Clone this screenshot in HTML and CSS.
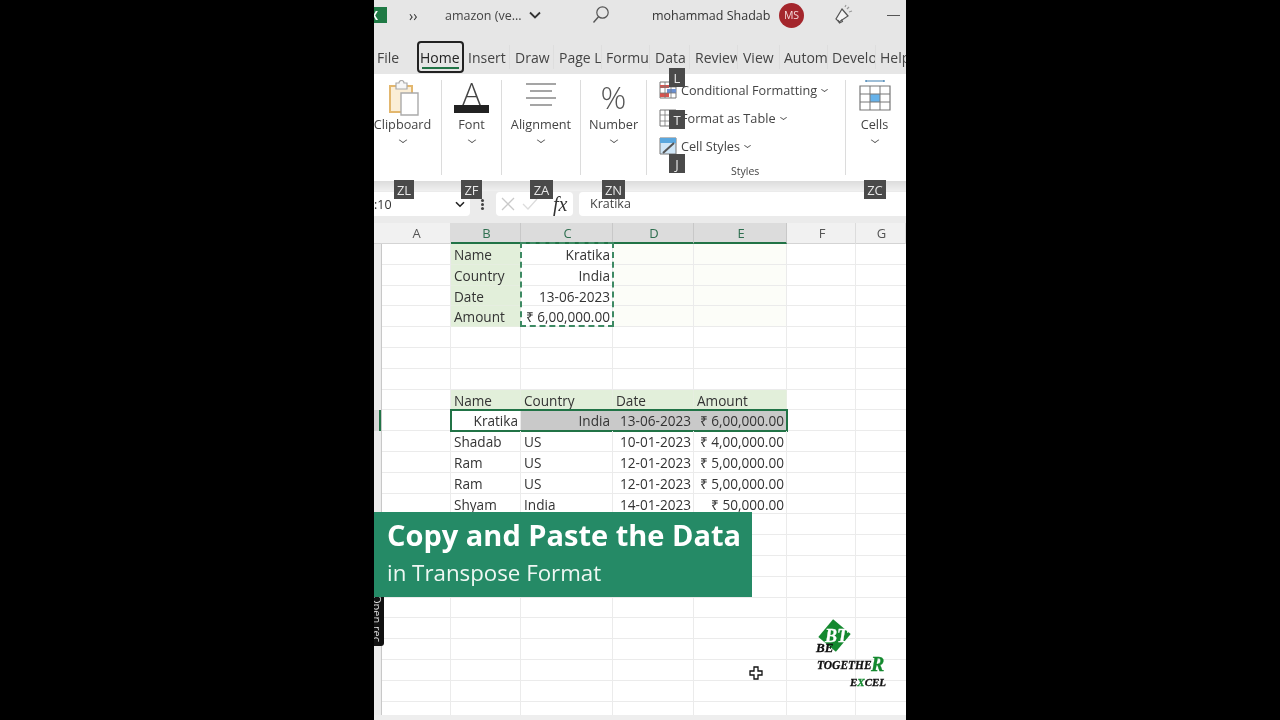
FILE: index.html
```html
<!DOCTYPE html>
<html>
    <head>
        <meta charset="utf-8">
        <title>Copy and Paste the Data</title>
        <link rel="stylesheet" href="styles.css">
    </head>
    <body>
        <div class="screen">
            <div class="titlebar">
                <div class="xlIcon"><span>X</span></div>
                <span class="more">››</span>
                <span class="docName">amazon (ve...</span>
                <svg class="docChevron" width="12" height="8" viewBox="0 0 12 8"><path d="M1 1.5l5 5 5-5" fill="none" stroke="#333" stroke-width="1.8"/></svg>
                <svg class="search" width="18" height="20" viewBox="0 0 18 20"><circle cx="10.5" cy="7.5" r="5.7" fill="none" stroke="#555" stroke-width="1.2"/><path d="M6.5 11.8L1.5 17.5" stroke="#555" stroke-width="1.4"/></svg>
                <span class="userName">mohammad Shadab</span>
                <span class="avatar">MS</span>
                <svg class="megaphone" width="20" height="22" viewBox="0 0 20 22"><path d="M8 5l6 7-9 6-3-3z" fill="#f4f4f4" stroke="#555" stroke-width="1.2"/><path d="M4 16l1.500 3 3-1.500-1-2" fill="none" stroke="#555" stroke-width="1.100"/><path d="M13 5l2-2M15 8l3-1M11 3l1-2" stroke="#999" stroke-width="1.200"/></svg>
                <span class="minimize"></span>
            </div>

            <div class="tabs">
                <span class="tab tabFile">File</span>
                <span class="tab tabHome">Home</span>
                <span class="tab tabInsert">Insert</span>
                <span class="tab tabDraw">Draw</span>
                <span class="tab tabPage">Page Layout</span>
                <span class="tab tabFormulas">Formulas</span>
                <span class="tab tabData">Data</span>
                <span class="tab tabReview">Review</span>
                <span class="tab tabView">View</span>
                <span class="tab tabAuto">Automate</span>
                <span class="tab tabDev">Developer</span>
                <span class="tab tabHelp">Help</span>
            </div>

            <div class="ribbon">
                <div class="group groupClipboard">
                    <svg class="bigIcon" width="34" height="36" viewBox="0 0 34 36"><path d="M3 6h22v26H3z" fill="#fbeed6" stroke="#e3b76e" stroke-width="2"/><path d="M9 3h3a2.500 2.500 0 0 1 5 0h3v6H9z" fill="#f7f7f7" stroke="#aaa" stroke-width="1.200"/><path d="M14 13h17v22H14z" fill="#fff" stroke="#aaa" stroke-width="1.400"/></svg>
                    <span class="groupLabel">Clipboard</span>
                    <span class="chev"></span>
                </div>
                <div class="group groupFont">
                    <div class="fontIcon"><span class="fontA">A</span><span class="fontBar"></span></div>
                    <span class="groupLabel">Font</span>
                    <span class="chev"></span>
                </div>
                <div class="group groupAlign">
                    <svg class="bigIcon" width="32" height="36" viewBox="0 0 32 36"><path d="M1 4h30M5 11h22M1 18h30M5 25h22" stroke="#888" stroke-width="1.300"/></svg>
                    <span class="groupLabel">Alignment</span>
                    <span class="chev"></span>
                </div>
                <div class="group groupNumber">
                    <span class="percent">%</span>
                    <span class="groupLabel">Number</span>
                    <span class="chev"></span>
                </div>
                <div class="group groupStyles">
                    <div class="styleRow">
                        <svg width="18" height="18" viewBox="0 0 18 18"><path d="M1 1h16v16H1z" fill="#fff" stroke="#777"/><path d="M1 4h9v3H1zM1 12h9v4H1z" fill="#d9534f"/><path d="M8 8h9v4H8z" fill="#6a8fd0"/><path d="M6 1v16M12 1v16M1 6h16M1 12h16" stroke="#777" stroke-width=".8"/></svg>
                        <span>Conditional Formatting</span><span class="chev small"></span>
                    </div>
                    <div class="styleRow">
                        <svg width="18" height="18" viewBox="0 0 18 18"><path d="M1 1h16v16H1z" fill="#fff" stroke="#777"/><path d="M6 1v16M12 1v16M1 6h16M1 12h16" stroke="#777" stroke-width=".8"/></svg>
                        <span>Format as Table</span><span class="chev small"></span>
                    </div>
                    <div class="styleRow">
                        <svg width="18" height="18" viewBox="0 0 18 18"><path d="M1 1h16v16H1z" fill="#cfe6f7" stroke="#777"/><path d="M1 1h16v5H1z" fill="#5aa7de"/><path d="M4 16L15 6" stroke="#555" stroke-width="2"/></svg>
                        <span>Cell Styles</span><span class="chev small"></span>
                    </div>
                    <span class="stylesLabel">Styles</span>
                </div>
                <div class="group groupCells">
                    <svg class="bigIcon" width="32" height="36" viewBox="0 0 32 36"><path d="M7 1h18M7 0v2M25 0v2" stroke="#3f7fb0" stroke-width="1.200"/><path d="M1 6h30v24H1z" fill="#fff" stroke="#777" stroke-width="1.200"/><path d="M11 14h10v8H11z" fill="#66b2ea"/><path d="M11 6v24M21 6v24M1 14h30M1 22h30" stroke="#777"/></svg>
                    <span class="groupLabel">Cells</span>
                    <span class="chev"></span>
                </div>
            </div>

            <div class="ribbonEdge"></div>

            <div class="formulaBar">
                <div class="nameBox"><span>:10</span><svg width="10" height="7" viewBox="0 0 10 7"><path d="M1 1.200l4 4 4-4" fill="none" stroke="#222" stroke-width="1.600"/></svg></div>
                <span class="dots"></span>
                <div class="fxBox">
                    <svg width="14" height="14" viewBox="0 0 14 14"><path d="M1 1l12 12M13 1L1 13" stroke="#c9c9c9" stroke-width="1.300"/></svg>
                    <svg width="16" height="14" viewBox="0 0 16 14"><path d="M1 7l5 5L15 2" fill="none" stroke="#dcdcdc" stroke-width="1.300"/></svg>
                    <span class="fx">fx</span>
                </div>
                <div class="formulaInput">Kratika</div>
            </div>

            <div class="colHeaders">
                <span class="corner"></span>
                <span class="col">A</span>
                <span class="col picked">B</span>
                <span class="col picked">C</span>
                <span class="col picked">D</span>
                <span class="col picked">E</span>
                <span class="col">F</span>
                <span class="col">G</span>
            </div>

            <div class="sheet">
                <span class="cell head b r1">Name</span>
                <span class="cell right c r1">Kratika</span>
                <span class="cell tint d r1"></span>
                <span class="cell tint e r1"></span>
                <span class="cell head b r2">Country</span>
                <span class="cell right c r2">India</span>
                <span class="cell tint d r2"></span>
                <span class="cell tint e r2"></span>
                <span class="cell head b r3">Date</span>
                <span class="cell right c r3">13-06-2023</span>
                <span class="cell tint d r3"></span>
                <span class="cell tint e r3"></span>
                <span class="cell head b r4">Amount</span>
                <span class="cell right c r4">₹ 6,00,000.00</span>
                <span class="cell tint d r4"></span>
                <span class="cell tint e r4"></span>
                <span class="marquee"></span>

                <span class="cell head b r8">Name</span>
                <span class="cell head c r8">Country</span>
                <span class="cell head d r8">Date</span>
                <span class="cell head e r8">Amount</span>

                <span class="rowMark r9"></span>
                <span class="cell right b r9">Kratika</span>
                <span class="cell right grey c r9">India</span>
                <span class="cell right grey d r9">13-06-2023</span>
                <span class="cell right grey e r9">₹ 6,00,000.00</span>
                <span class="selection"></span>

                <span class="cell b r10">Shadab</span>
                <span class="cell c r10">US</span>
                <span class="cell right d r10">10-01-2023</span>
                <span class="cell right e r10">₹ 4,00,000.00</span>

                <span class="cell b r11">Ram</span>
                <span class="cell c r11">US</span>
                <span class="cell right d r11">12-01-2023</span>
                <span class="cell right e r11">₹ 5,00,000.00</span>

                <span class="cell b r12">Ram</span>
                <span class="cell c r12">US</span>
                <span class="cell right d r12">12-01-2023</span>
                <span class="cell right e r12">₹ 5,00,000.00</span>

                <span class="cell b r13">Shyam</span>
                <span class="cell c r13">India</span>
                <span class="cell right d r13">14-01-2023</span>
                <span class="cell right e r13">₹ 50,000.00</span>
            </div>

            <div class="scrollEdge"></div>

            <span class="keytip kL">L</span>
            <span class="keytip kT">T</span>
            <span class="keytip kJ">J</span>
            <span class="keytip kZL">ZL</span>
            <span class="keytip kZF">ZF</span>
            <span class="keytip kZA">ZA</span>
            <span class="keytip kZN">ZN</span>
            <span class="keytip kZC">ZC</span>

            <div class="recPill"><span>Open rec</span></div>

            <div class="banner">
                <div class="bannerTitle">Copy and Paste the Data</div>
                <div class="bannerSub">in Transpose Format</div>
            </div>

            <svg class="cursor" width="14" height="14" viewBox="0 0 14 14"><path d="M5 1h4v4h4v4H9v4H5V9H1V5h4z" fill="#fff" stroke="#111" stroke-width="1.300"/></svg>

            <div class="logo">
                <div class="logoMark"></div>
                <span class="logoBt">BT</span>
                <span class="logoBe">BE</span>
                <span class="logoTogether">TOGETHE</span>
                <span class="logoR">R</span>
                <span class="logoExcel">E<b>X</b>CEL</span>
            </div>
        </div>
    </body>
</html>
```

FILE: styles.css
```css
body {
    margin: 0;
    background: black;
    font-family: 'Open Sans', 'Liberation Sans', sans-serif;
    color: rgb(51, 51, 51);
}

.screen {
    position: relative;
    width: 532px;
    height: 720px;
    margin-left: 374px;
    overflow: hidden;
    background: white;
    display: flex;
    flex-direction: column;
    filter: blur(0.35px);
}

/* title bar */
.titlebar {
    height: 30px;
    flex: none;
    background: #e6e6e6;
    display: flex;
    align-items: center;
    font-size: 12.5px;
    padding-bottom: 10px;
}

.xlIcon {
    width: 13px;
    height: 16px;
    background: #1f7a45;
    color: white;
    font-size: 12px;
    font-weight: bold;
    overflow: hidden;
    display: flex;
    align-items: center;
}

.xlIcon span {
    margin-left: -4px;
}

.more {
    margin-left: 22px;
    font-size: 14px;
    width: 36px;
}

.docName {
    width: 84px;
    color: #444;
}

.docChevron {
    margin-right: 51px;
}

.search {
    margin-right: 42px;
}

.userName {
    width: 127px;
    color: #333;
}

.avatar {
    width: 25px;
    height: 25px;
    border-radius: 50%;
    background: #a4262c;
    color: #f5dada;
    font-size: 10.5px;
    display: flex;
    align-items: center;
    justify-content: center;
}

.megaphone {
    margin-left: 30px;
}

.minimize {
    width: 13px;
    height: 1px;
    background: #555;
    margin-left: 33px;
}

/* tabs */
.tabs {
    height: 34px;
    flex: none;
    background: #e6e6e6;
    display: flex;
    align-items: center;
    font-size: 14px;
    color: #444;
    white-space: nowrap;
}

.tab {
    overflow: hidden;
    display: block;
    height: 24px;
    line-height: 26px;
    box-sizing: border-box;
    padding-left: 4px;
    border-right: 1px solid #dedede;
    flex: none;
}

.tabFile { width: 43px; padding-left: 3px; border-right: 0; }
.tabHome {
    width: 47px;
    height: 32px;
    line-height: 29px;
    padding-left: 1px;
    border: 2px solid #222;
    border-radius: 4px;
    color: #222;
    position: relative;
    margin-right: 4px;
    overflow: visible;
}
.tabHome::after {
    content: "";
    position: absolute;
    left: 3px;
    right: 3px;
    bottom: 2px;
    height: 2px;
    background: #217346;
}
.tabInsert { width: 42px; padding-left: 0; }
.tabDraw { width: 44px; padding-left: 5px; }
.tabPage { width: 48px; padding-left: 5px; }
.tabFormulas { width: 48px; }
.tabData { width: 40px; padding-left: 5px; }
.tabReview { width: 48px; padding-left: 5px; }
.tabView { width: 42px; padding-left: 5px; }
.tabAuto { width: 48px; padding-left: 4px; }
.tabDev { width: 48px; padding-left: 4px; }
.tabHelp { width: 30px; padding-left: 4px; border-right: 0; }

/* ribbon */
.ribbon {
    height: 107px;
    flex: none;
    background: white;
    display: flex;
    font-size: 12.7px;
    color: #444;
}

.group {
    flex: none;
    box-sizing: border-box;
    margin: 6px 0;
    height: 95px;
    border-right: 1px solid #dcdcdc;
    display: flex;
    flex-direction: column;
    align-items: center;
    position: relative;
}

.groupClipboard { width: 68px; }
.groupFont { width: 60px; }
.groupAlign { width: 79px; }
.groupNumber { width: 66px; }
.groupStyles { width: 199px; align-items: flex-start; padding-left: 12px; }
.groupCells { width: 60px; padding-right: 3px; border-right: 0; }

.groupClipboard .groupLabel { margin-left: -10px; }
.groupClipboard .chev { margin-left: -10px; }
.groupClipboard .bigIcon { margin-left: -8px; }

.bigIcon {
    height: 36px;
    flex: none;
}

.groupLabel {
    margin-top: -3px;
    height: 22px;
    line-height: 22px;
    white-space: nowrap;
}

.chev {
    width: 5px;
    height: 5px;
    border-right: 1.200px solid #555;
    border-bottom: 1.200px solid #555;
    transform: scaleY(.7) rotate(45deg);
    margin-top: 2px;
    flex: none;
}

.chev.small {
    width: 4px;
    height: 4px;
    margin: -2px 0 0 1px;
}

.fontIcon {
    height: 36px;
    width: 36px;
    display: flex;
    flex-direction: column;
    align-items: center;
}

.fontA {
    font-size: 31px;
    line-height: 26px;
    height: 25px;
    color: #444;
    font-weight: 300;
}

.fontBar {
    width: 35px;
    height: 8px;
    background: #222;
}

.percent {
    height: 36px;
    line-height: 34px;
    font-size: 32px;
    font-weight: 300;
    color: #555;
}

.styleRow {
    height: 28px;
    display: flex;
    align-items: center;
    gap: 4px;
    white-space: nowrap;
    flex: none;
}

.styleRow:first-child {
    margin-top: -4px;
}

.styleRow svg {
    flex: none;
}

.stylesLabel {
    position: absolute;
    left: 84px;
    top: 84px;
    font-size: 10.5px;
}

.ribbonEdge {
    height: 10px;
    flex: none;
    background: linear-gradient(#dcdcdc, #e6e6e6 50%, #f0f0f0);
}

/* formula bar */
.formulaBar {
    height: 32px;
    flex: none;
    background: #ebebeb;
    display: flex;
    align-items: flex-start;
    font-size: 12.5px;
    padding-top: 1px;
    box-sizing: border-box;
    color: #444;
}

.nameBox {
    width: 96px;
    height: 24px;
    background: white;
    border-radius: 0 4px 4px 0;
    display: flex;
    align-items: center;
    justify-content: space-between;
    padding-right: 5px;
    box-sizing: border-box;
    color: #333;
}

.dots {
    width: 3px;
    height: 3px;
    margin: 11px 6px 0 11px;
    background: #444;
    border-radius: 50%;
    box-shadow: 0 -4px 0 #444, 0 4px 0 #444;
}

.fxBox {
    width: 77px;
    height: 24px;
    margin-left: 6px;
    background: white;
    border-radius: 4px;
    display: flex;
    align-items: center;
    padding-left: 5px;
    gap: 7px;
    box-sizing: border-box;
}

.fx {
    font-family: 'Liberation Serif', serif;
    font-style: italic;
    font-size: 20px;
    color: #333;
    margin-left: 8px;
    line-height: 24px;
}

.formulaInput {
    flex: 1;
    height: 24px;
    line-height: 24px;
    margin-left: 6px;
    padding-left: 11px;
    background: white;
    border-radius: 4px 0 0 4px;
}

/* sheet */
.colHeaders, .sheet {
    display: grid;
    grid-template-columns: 7px 70px 70px 92px 81px 93px 69px 50px;
}

.colHeaders {
    height: 21px;
    flex: none;
    background: #f1f1f1;
    font-size: 13px;
    color: #555;
    border-bottom: 1px solid #d4d4d4;
    box-sizing: border-box;
}

.col {
    text-align: center;
    line-height: 20px;
    padding-left: 2px;
    border-right: 1px solid #dcdcdc;
}

.col.picked {
    background: #dcdcdc;
    color: #2f6f50;
    border-bottom: 2px solid #217346;
    border-right-color: #c8c8c8;
    height: 21px;
    box-sizing: border-box;
}

.sheet {
    flex: 1;
    grid-auto-rows: 20.800px;
    font-size: 13.6px;
    color: #333;
    background-color: white;
    background-image:
        linear-gradient(90deg, #ececec 7px, #c8c8c8 7px, #c8c8c8 8px, transparent 8px),
        linear-gradient(90deg, transparent 76px, #ebebeb 76px, #ebebeb 77px, transparent 77px),
        linear-gradient(90deg, transparent 146px, #ebebeb 146px, #ebebeb 147px, transparent 147px),
        linear-gradient(90deg, transparent 238px, #ebebeb 238px, #ebebeb 239px, transparent 239px),
        linear-gradient(90deg, transparent 319px, #ebebeb 319px, #ebebeb 320px, transparent 320px),
        linear-gradient(90deg, transparent 412px, #ebebeb 412px, #ebebeb 413px, transparent 413px),
        linear-gradient(90deg, transparent 481px, #ebebeb 481px, #ebebeb 482px, transparent 482px),
        repeating-linear-gradient(#fff 0, #fff 19.800px, #ebebeb 19.800px, #ebebeb 20.800px);
}

.cell {
    padding: 0 2px 0 3px;
    line-height: 22px;
    white-space: nowrap;
    overflow: hidden;
    border-bottom: 1px solid #ebebeb;
    border-right: 1px solid #ebebeb;
}

.right { text-align: right; }
.head { background: #e2efda; border-color: #e6eee0; }
.tint { background: #fcfdf8; }
.grey { background: #c9c9c9; border-color: #c9c9c9; }

.b { grid-column: 3; }
.c { grid-column: 4; }
.d { grid-column: 5; }
.e { grid-column: 6; }

.r1 { grid-row: 1; }
.r2 { grid-row: 2; }
.r3 { grid-row: 3; }
.r4 { grid-row: 4; }
.r8 { grid-row: 8; }
.r9 { grid-row: 9; }
.r10 { grid-row: 10; }
.r11 { grid-row: 11; }
.r12 { grid-row: 12; }
.r13 { grid-row: 13; }

.rowMark {
    grid-column: 1;
    background: #d6d6d6;
    border-right: 2px solid #217346;
    box-sizing: border-box;
}

.marquee {
    grid-column: 4;
    grid-row: 1 / 5;
    border: 2px dashed #3d8a63;
    margin: -2px -1px 0 -1px;
}

.selection {
    grid-column: 3 / 7;
    grid-row: 9;
    border: 2px solid #217346;
    margin: -1px;
}

.scrollEdge {
    position: absolute;
    left: 0;
    right: 0;
    bottom: 0;
    height: 5px;
    background: #eeeeee;
}

/* overlays */
.keytip {
    position: absolute;
    background: #4a4a4a;
    color: #e8e8e8;
    font-size: 13px;
    display: flex;
    align-items: center;
    justify-content: center;
    height: 19px;
}

.kL { left: 295px; top: 68px; width: 16px; }
.kT { left: 295px; top: 110px; width: 16px; }
.kJ { left: 295px; top: 154px; width: 16px; }
.kZL { left: 20px; top: 180px; width: 20px; }
.kZF { left: 87px; top: 180px; width: 21px; }
.kZA { left: 156px; top: 180px; width: 23px; }
.kZN { left: 228px; top: 180px; width: 23px; }
.kZC { left: 490px; top: 180px; width: 22px; }

.recPill {
    position: absolute;
    left: 0;
    top: 590px;
    width: 10px;
    height: 56px;
    background: #111;
    border-radius: 0 0 3px 0;
    overflow: hidden;
}

.recPill span {
    position: absolute;
    left: -4px;
    top: 5px;
    writing-mode: vertical-rl;
    color: #ddd;
    font-size: 11px;
    white-space: nowrap;
}

.banner {
    position: absolute;
    left: 0;
    top: 512px;
    width: 378px;
    height: 85px;
    background: #258a66;
    color: white;
    padding-left: 13px;
    box-sizing: border-box;
}

.bannerTitle {
    font-size: 29px;
    font-weight: 700;
    line-height: 30px;
    margin-top: 8px;
    white-space: nowrap;
}

.bannerSub {
    font-size: 22.3px;
    line-height: 28px;
    margin-top: 9px;
    white-space: nowrap;
    color: #eef7f3;
}

.cursor {
    position: absolute;
    left: 375px;
    top: 666px;
}

.logo {
    position: absolute;
    left: 441px;
    top: 620px;
    width: 72px;
    height: 72px;
    font-family: 'Liberation Serif', serif;
    font-style: italic;
    font-weight: bold;
    color: #111;
    white-space: nowrap;
    -webkit-text-stroke: 0.3px currentColor;
}

.logoMark {
    position: absolute;
    left: 8px;
    top: 4px;
    width: 23px;
    height: 23px;
    background: #14892f;
    transform: rotate(40deg);
}

.logoBt {
    position: absolute;
    left: 10px;
    top: 6px;
    font-size: 18px;
    color: white;
}

.logoBe {
    position: absolute;
    left: 1px;
    top: 20px;
    font-size: 13px;
}

.logoTogether {
    position: absolute;
    left: 2px;
    top: 39px;
    font-size: 11.500px;
}

.logoR {
    position: absolute;
    left: 56px;
    top: 33px;
    font-size: 20px;
    color: #14892f;
}

.logoExcel {
    position: absolute;
    left: 35px;
    top: 56px;
    font-size: 11px;
}

.logoExcel b {
    color: #14892f;
}
```
